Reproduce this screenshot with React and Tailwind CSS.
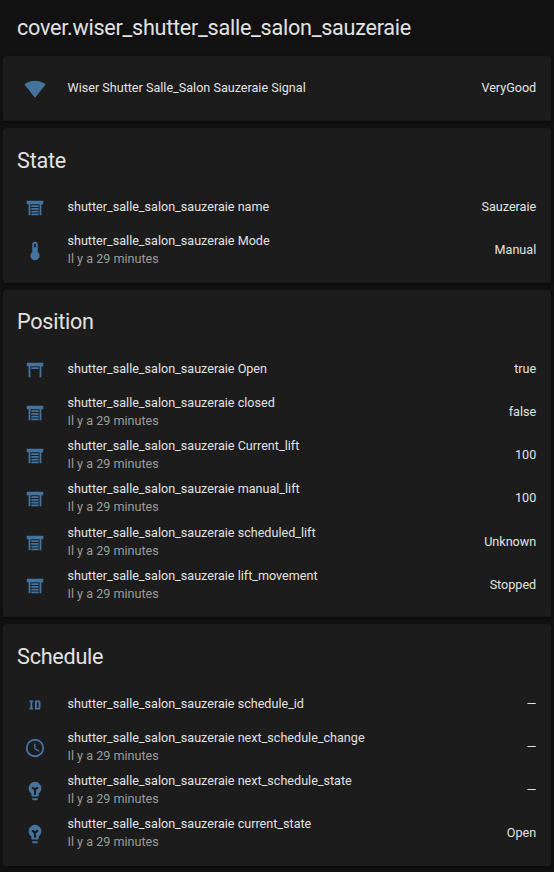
const ICONS = {
  signal: 'M12,3C7.79,3 3.7,4.41 0.38,7C4.41,12.06 7.89,16.37 12,21.5C16.08,16.42 20.24,11.24 23.65,7C20.32,4.41 16.22,3 12,3Z',
  shutter: 'M3 4H21V8H19V20H17V8H7V20H5V8H3V4M8 9H16V11H8V9M8 12H16V14H8V12M8 15H16V17H8V15M8 18H16V20H8V18Z',
  shutterOpen: 'M3 4H21V8H19V20H17V8H7V20H5V8H3V4M8 9H16V11H8V9Z',
  thermometer: 'M15 13V5A3 3 0 0 0 9 5V13A5 5 0 1 0 15 13M12 4A1 1 0 0 1 13 5V8H11V5A1 1 0 0 1 12 4Z',
  id: 'M10 7V9H9V15H10V17H6V15H7V9H6V7H10M16 7C17.11 7 18 7.9 18 9V15C18 16.11 17.11 17 16 17H12V7M16 9H14V15H16V9Z',
  clock: 'M12,20A8,8 0 0,0 20,12A8,8 0 0,0 12,4A8,8 0 0,0 4,12A8,8 0 0,0 12,20M12,2A10,10 0 0,1 22,12A10,10 0 0,1 12,22C6.47,22 2,17.5 2,12A10,10 0 0,1 12,2M12.5,7V12.25L17,14.92L16.25,16.15L11,13V7H12.5Z',
  bulb: 'M12,2A7,7 0 0,0 5,9C5,11.38 6.19,13.47 8,14.74V17A1,1 0 0,0 9,18H15A1,1 0 0,0 16,17V14.74C17.81,13.47 19,11.38 19,9A7,7 0 0,0 12,2M9,21A1,1 0 0,0 10,22H14A1,1 0 0,0 15,21V20H9V21ZM8.5 7.5H10.3L12 9L13.7 7.5H15.5V9.2L13.1 11.3V16H10.9V11.3L8.5 9.2Z',
};

const P = 'shutter_salle_salon_sauzeraie ';
const AGO = 'Il y a 29 minutes';

const CARDS = [
  { rows: [['signal', 'Wiser Shutter Salle_Salon Sauzeraie Signal', 'VeryGood']] },
  {
    title: 'State',
    rows: [
      ['shutter', P + 'name', 'Sauzeraie'],
      ['thermometer', P + 'Mode', 'Manual', AGO],
    ],
  },
  {
    title: 'Position',
    rows: [
      ['shutterOpen', P + 'Open', 'true'],
      ['shutter', P + 'closed', 'false', AGO],
      ['shutter', P + 'Current_lift', '100', AGO],
      ['shutter', P + 'manual_lift', '100', AGO],
      ['shutter', P + 'scheduled_lift', 'Unknown', AGO],
      ['shutter', P + 'lift_movement', 'Stopped', AGO],
    ],
  },
  {
    title: 'Schedule',
    rows: [
      ['id', P + 'schedule_id', '—'],
      ['clock', P + 'next_schedule_change', '—', AGO],
      ['bulb', P + 'next_schedule_state', '—', AGO],
      ['bulb', P + 'current_state', 'Open', AGO],
    ],
  },
];

function Row({ icon, name, value, ago }) {
  return (
    <div className="flex h-9 items-center">
      <div className="flex w-9 shrink-0 justify-center pt-[1.8px]">
        <svg viewBox="0 0 24 24" className="size-[22px] fill-[#44739e]" fillRule="evenodd">
          <path d={ICONS[icon]} />
        </svg>
      </div>
      <div className="ml-[14.4px] grow whitespace-nowrap">
        <div>{name}</div>
        {ago && <div className="text-[#9b9b9b]">{ago}</div>}
      </div>
      <div className="pr-[0.4px]">{value}</div>
    </div>
  );
}

function Card({ title, rows }) {
  return (
    <section className="rounded-[3.6px] bg-[#1c1c1c] px-[14.4px] pb-[14.4px] shadow-[0_2px_2px_0_rgba(0,0,0,0.14),0_1px_4px_0_rgba(0,0,0,0.12),0_3px_1px_-2px_rgba(0,0,0,0.2)]">
      {title ? (
        <h2 className="h-[61.2px] pt-[10.75px] text-[21.6px] leading-[43.2px] tracking-[-0.012em]">{title}</h2>
      ) : (
        <div className="h-[14.4px]" />
      )}
      <div className="flex flex-col gap-[7.2px]">
        {rows.map(([icon, name, value, ago]) => (
          <Row key={name} icon={icon} name={name} value={value} ago={ago} />
        ))}
      </div>
    </section>
  );
}

export default function App() {
  return (
    <main className="h-[872px] overflow-hidden bg-[#111111] pr-[3px] pl-[2.7px] font-[Roboto,sans-serif] text-[12.6px] leading-[18px] text-[#e1e1e1]">
      <h1 className="h-[55.8px] pt-[6px] pl-[14.4px] text-[21.6px] leading-[43.2px] tracking-[-0.012em]">
        cover.wiser_shutter_salle_salon_sauzeraie
      </h1>
      <div className="flex flex-col gap-[7.2px]">
        {CARDS.map((card, i) => (
          <Card key={i} title={card.title} rows={card.rows} />
        ))}
      </div>
    </main>
  );
}
